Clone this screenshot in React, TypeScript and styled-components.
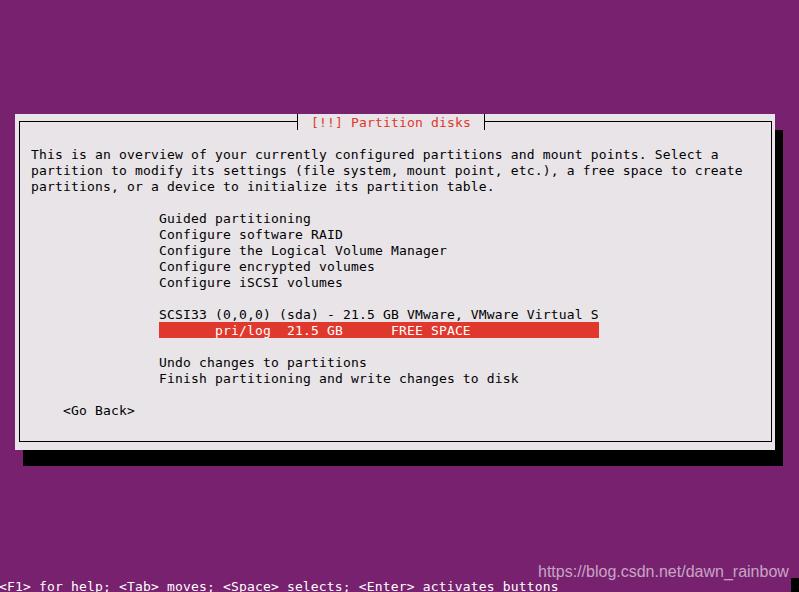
import styled, { createGlobalStyle } from "styled-components";

const GlobalStyle = createGlobalStyle`
  html, body {
    margin: 0;
    padding: 0;
    background: #77216f;
    overflow: hidden;
  }
`;

const Screen = styled.div`
  position: relative;
  width: 799px;
  height: 592px;
  overflow: hidden;
  background: #77216f;
  display: flex;
  flex-direction: column;
  font-family: "DejaVu Sans Mono", "Liberation Mono", monospace;
  font-size: 13px;
  letter-spacing: 0.17px;
  line-height: 16px;
`;

const Stage = styled.div`
  flex: 1;
  padding: 114px 0 0 15px;
`;

const Dialog = styled.div`
  display: flex;
  width: 760px;
  height: 336px;
  box-sizing: border-box;
  padding: 7px 3px 8px 4px;
  background: #e8e4e8;
  box-shadow: 8px 16px 0 #000;
`;

const Frame = styled.div`
  position: relative;
  flex: 1;
  border: 1px solid #000;
  padding-top: 24px;
  color: #000;
`;

// one text cell row: 16px tall, glyphs sit a little low like the console font
const Line = styled.div`
  height: 16px;
  box-sizing: border-box;
  padding-top: 2px;
  line-height: 14px;
  white-space: pre;
`;

const Title = styled(Line)`
  position: absolute;
  top: -8px;
  left: 277px;
  padding-left: 13px;
  padding-right: 13px;
  border-left: 1px solid #000;
  border-right: 1px solid #000;
  background: #e8e4e8;
  color: #df382c;
`;

const Intro = styled.div`
  padding-left: 11px;
`;

const Menu = styled.div`
  margin: 16px 0 0 139px;
`;

const Item = styled(Line)<{ $selected?: boolean }>`
  width: 440px;
  background: ${(p) => (p.$selected ? "#df382c" : "transparent")};
  color: ${(p) => (p.$selected ? "#fff" : "#000")};
`;

const Button = styled(Line)`
  margin: 16px 0 0 43px;
`;

const Footer = styled.div`
  display: flex;
  justify-content: space-between;
  margin: 0 0 -2px -1px;
  color: #fff;
`;

const Cursor = styled.span`
  width: 8px;
  height: 16px;
  background: #000;
`;

const Watermark = styled.div`
  position: absolute;
  left: 538px;
  top: 564px;
  font-family: "Liberation Sans", Arial, sans-serif;
  font-size: 16px;
  line-height: 16px;
  letter-spacing: 0;
  color: rgba(255, 255, 255, 0.6);
`;

const intro = [
  "This is an overview of your currently configured partitions and mount points. Select a",
  "partition to modify its settings (file system, mount point, etc.), a free space to create",
  "partitions, or a device to initialize its partition table.",
];

const tools = [
  "Guided partitioning",
  "Configure software RAID",
  "Configure the Logical Volume Manager",
  "Configure encrypted volumes",
  "Configure iSCSI volumes",
];

export default function App() {
  return (
    <>
      <GlobalStyle />
      <Screen>
        <Stage>
          <Dialog>
            <Frame>
              <Title>[!!] Partition disks</Title>
              <Intro>
                {intro.map((l) => (
                  <Line key={l}>{l}</Line>
                ))}
              </Intro>
              <Menu>
                {tools.map((t) => (
                  <Item key={t}>{t}</Item>
                ))}
              </Menu>
              <Menu>
                <Item>SCSI33 (0,0,0) (sda) - 21.5 GB VMware, VMware Virtual S</Item>
                <Item $selected>{"       pri/log  21.5 GB      FREE SPACE"}</Item>
              </Menu>
              <Menu>
                <Item>Undo changes to partitions</Item>
                <Item>Finish partitioning and write changes to disk</Item>
              </Menu>
              <Button>&lt;Go Back&gt;</Button>
            </Frame>
          </Dialog>
        </Stage>
        <Footer>
          <Line>{"<F1> for help; <Tab> moves; <Space> selects; <Enter> activates buttons"}</Line>
          <Cursor />
        </Footer>
        <Watermark>https://blog.csdn.net/dawn_rainbow</Watermark>
      </Screen>
    </>
  );
}
